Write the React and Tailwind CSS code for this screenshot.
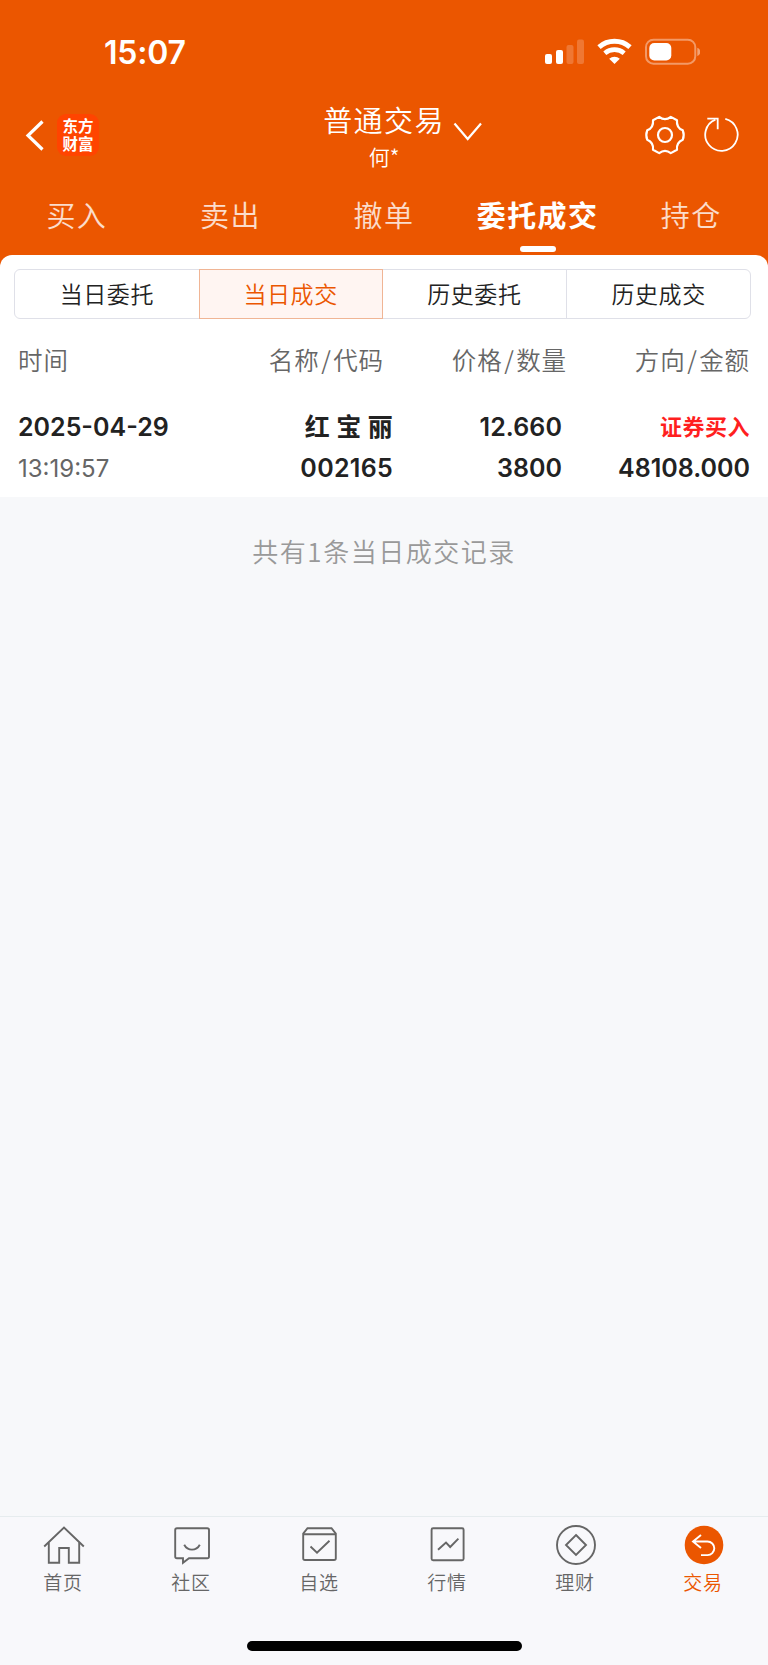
const tabs = ["买入", "卖出", "撤单", "委托成交", "持仓"];
const filters = ["当日委托", "当日成交", "历史委托", "历史成交"];

function StatusIcons() {
  return (
    <svg width="160" height="30" viewBox="0 0 160 30" fill="none">
      {/* Signal */}
      <rect x="5" y="17" width="7" height="10" rx="2" fill="#fff" />
      <rect x="16" y="13" width="7" height="14" rx="2" fill="#fff" />
      <rect x="26.5" y="8" width="7" height="19" rx="2" fill="#fff" opacity="0.2" />
      <rect x="37" y="2.5" width="7" height="24.5" rx="2" fill="#fff" opacity="0.2" />
      {/* Wifi */}
      <path d="M59 10.2a23.5 23.5 0 0 1 31 0" stroke="#fff" strokeWidth="5" />
      <path d="M64.8 16.2a15 15 0 0 1 19.4 0" stroke="#fff" strokeWidth="4.6" />
      <path d="M74.5 27l-5.3-5.3a8 8 0 0 1 10.6 0z" fill="#fff" />
      {/* Battery */}
      <rect x="106" y="2.7" width="49.3" height="24" rx="7.5" stroke="#fff" strokeOpacity="0.4" strokeWidth="2" />
      <rect x="109.3" y="6" width="22" height="17.5" rx="5" fill="#fff" />
      <path d="M157.3 10.8c4 1.6 4 6.6 0 8.2z" fill="#fff" opacity="0.45" />
    </svg>
  );
}

function GearIcon() {
  return (
    <svg width="42" height="42" viewBox="0 0 42 42" fill="none" stroke="#fff" strokeWidth="2.2" strokeLinejoin="round">
      <path d="M15.2 2.9L9 6.3Q9.8 13.6 3.2 16.3Q1.4 21 3.2 25.7Q9.8 28.4 9 35.7L15.2 39.1Q21 34.6 26.8 39.1L33 35.7Q32.2 28.4 38.8 25.7Q40.6 21 38.8 16.3Q32.2 13.6 33 6.3L26.8 2.9Q21 7.4 15.2 2.9z" />
      <circle cx="21" cy="21" r="7" />
    </svg>
  );
}

function RefreshIcon() {
  return (
    <svg className="mt-px" width="38" height="38" viewBox="0 0 38 38" fill="none" stroke="#fff" strokeWidth="1.8">
      <path d="M22.3 3.9A16.2 16.2 0 1 1 12.4 4.6" />
      <path d="M4.3 3.7h10.4v10.5" />
    </svg>
  );
}

const navItems = [
  {
    label: "首页",
    icon: (
      <>
        <path d="M2.2 22.5L22 3.5l19.8 19" />
        <path d="M6.8 18.5v20.2h10.4V24h9.6v14.7h10.4V18.5" />
      </>
    ),
  },
  {
    label: "社区",
    icon: (
      <>
        <path d="M7 4.2h30.2a1.8 1.8 0 0 1 1.8 1.8v26.4a1.8 1.8 0 0 1-1.8 1.8H19l-6 4.6v-4.6H7a1.8 1.8 0 0 1-1.8-1.8V6A1.8 1.8 0 0 1 7 4.2z" />
        <path d="M14.2 20.7c3.6 6.6 12 6.600 15.600 0" />
      </>
    ),
  },
  {
    label: "自选",
    icon: (
      <>
        <path d="M5.2 9.7v24.5a1.8 1.8 0 0 0 1.8 1.8h29a1.8 1.8 0 0 0 1.8-1.8V9.7l-4.3-5.5h-24z" />
        <path d="M5.2 10.3h32.6M12.5 22.5l6.5 6.2 12.5-12" />
      </>
    ),
  },
  {
    label: "行情",
    icon: (
      <>
        <rect x="5.6" y="4.2" width="32" height="32" rx="1.5" />
        <path d="M12 25.8l8-7.3 4.2 4.5 8.2-8.4" />
      </>
    ),
  },
  {
    label: "理财",
    icon: (
      <>
        <circle cx="22" cy="21" r="19" />
        <path d="M22 11l10 10-10 10-10-10z" />
      </>
    ),
  },
  {
    label: "交易",
    active: true,
    icon: (
      <>
        <circle cx="22" cy="21" r="19.3" fill="#eb5600" stroke="none" />
        <path d="M19 11l-8 6.5 8 6.5M11.5 17.5H25.500a6.800 6.800 0 0 1 0 13.600H19" stroke="#fff" />
      </>
    ),
  },
];

function Header() {
  return (
    <header className="h-[267px] bg-[#eb5600] text-white">
      <div className="flex h-[100px] items-start justify-between pt-[37px] pr-[68px] pl-[104px]">
        <span className="font-['Inter'] text-[32px] leading-[31px] font-semibold tracking-[-0.2px]">15:07</span>
        <StatusIcons />
      </div>

      <div className="grid h-[85px] grid-cols-3">
        <div className="flex items-start pl-[25px]">
          <svg className="mt-[19px]" width="20" height="34" viewBox="0 0 20 34" fill="none">
            <path d="M17.5 2.5L3 16.5l14.5 14" stroke="#fff" strokeWidth="3.2" />
          </svg>
          <div className="mt-[14px] ml-3 h-[42px] w-[42px] rounded-[9px] bg-[#ff4400] pt-[2px] text-center text-[15.5px] leading-[18px] font-bold">
            东方
            <br />
            财富
          </div>
        </div>
        <div className="flex flex-col items-center">
          <div className="relative -mt-px text-[29px] leading-[40px] font-[350] tracking-[1.4px]">
            普通交易
            <svg className="absolute top-[22px] left-[130px]" width="30" height="22" viewBox="0 0 30 22" fill="none">
              <path d="M1.5 2.5l13.2 15.5L28 2.5" stroke="#fff" strokeWidth="2.2" />
            </svg>
          </div>
          <span className="mt-[3px] text-[21px] leading-[28px] font-[350]">何*</span>
        </div>
        <div className="flex items-start justify-end gap-[17px] pt-[14px] pr-[27px]">
          <GearIcon />
          <RefreshIcon />
        </div>
      </div>

      <nav className="grid grid-cols-5 pt-[8px] text-[29px] leading-[42px] tracking-[1.4px]">
        {tabs.map((tab) => (
          <div key={tab} className="flex flex-col items-center">
            {tab === "委托成交" ? (
              <>
                <span className="font-bold">{tab}</span>
                <span className="mt-[11px] h-[6px] w-[36px] rounded-[3px] bg-white" />
              </>
            ) : (
              <span className="font-[350] text-white/80">{tab}</span>
            )}
          </div>
        ))}
      </nav>
    </header>
  );
}

function Filters() {
  return (
    <div className="mr-[17px] ml-[14px] grid h-[50px] grid-cols-4 rounded-md border border-[#dfe0e8] text-[23px] leading-[46px] font-[350] tracking-[0.6px] text-[#222]">
      {filters.map((name, i) => (
        <div
          key={name}
          className={
            i === 1
              ? "-my-px border border-[#f0b595] bg-[#fff5f2] text-center text-[#eb5600]"
              : i === 3
                ? "border-l border-[#dfe0e8] text-center"
                : "text-center"
          }
        >
          {name}
        </div>
      ))}
    </div>
  );
}

function HeadCell({ first, second }) {
  return (
    <span className="text-right">
      {first}
      <span className="mx-[1.5px]">/</span>
      {second}
    </span>
  );
}

function Trades() {
  return (
    <div className="px-[18px] text-[#222]">
      <div className="mt-[22px] grid h-[38px] grid-cols-[181px_185px_183px_183px] items-center text-[24.5px] font-[350] tracking-[0.9px] text-[#666]">
        <span>时间</span>
        <HeadCell first="名称" second="代码" />
        <HeadCell first="价格" second="数量" />
        <HeadCell first="方向" second="金额" />
      </div>
      <div className="mt-[28px] grid grid-cols-[181px_194px_169px_188px] font-['Inter','Noto_Sans_CJK_SC',sans-serif] text-[25px] leading-[41px] font-semibold">
        <span>2025-04-29</span>
        <span className="text-right font-bold tracking-[0.3px]">红 宝 丽</span>
        <span className="text-right tracking-[0.1px]">12.660</span>
        <span className="text-right text-[22px] font-bold tracking-[0.5px] text-[#ff1f1f]">证券买入</span>
        <span className="text-[24px] font-normal text-[#666]">13:19:57</span>
        <span className="text-right tracking-[0.3px]">002165</span>
        <span className="text-right">3800</span>
        <span className="text-right">48108.000</span>
      </div>
    </div>
  );
}

function BottomNav() {
  return (
    <footer className="h-[149px] border-t border-[#e6ecee] bg-[#f8f8fb]">
      <div className="grid grid-cols-6 pt-[7px]">
        {navItems.map(({ label, icon, active }) => (
          <div
            key={label}
            className={active ? "flex flex-col items-center text-[#eb5600]" : "flex flex-col items-center text-[#666]"}
          >
            <svg width="44" height="43" viewBox="0 0 44 43" fill="none" stroke="currentColor" strokeWidth="1.9">
              {icon}
            </svg>
            <span className="mt-px mr-[2px] text-[19px] leading-[28px] font-[350] tracking-[0.8px]">{label}</span>
          </div>
        ))}
      </div>
      <div className="mx-auto mt-[45px] h-[10px] w-[275px] rounded-full bg-black" />
    </footer>
  );
}

export default function App() {
  return (
    <div className="flex h-[1665px] w-[768px] flex-col overflow-hidden bg-[#f7f8fa] font-['Noto_Sans_CJK_SC',sans-serif]">
      <Header />
      <main className="-mt-3 flex-1">
        <section className="h-[242px] rounded-t-xl bg-white pt-[14px]">
          <Filters />
          <Trades />
        </section>
        <p className="mt-[34px] text-center text-[26px] leading-[40px] font-[350] tracking-[1.5px] text-[#999]">
          共有1条当日成交记录
        </p>
      </main>
      <BottomNav />
    </div>
  );
}
